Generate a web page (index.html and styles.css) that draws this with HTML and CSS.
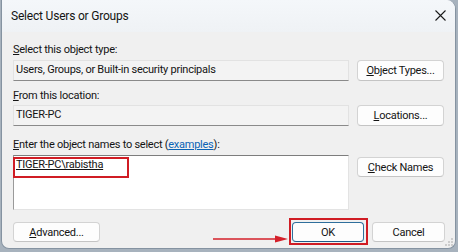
FILE: index.html
```html
<!DOCTYPE html>
<html>
<head>
<meta charset="utf-8">
<link rel="stylesheet" href="styles.css">
</head>
<body>
<div class="window">
  <div class="titlebar">
    <span class="title">Select Users or Groups</span>
    <svg class="close" width="11" height="11" viewBox="0 0 11 11"><path d="M0.5 0.5 L10.5 10.5 M10.5 0.5 L0.5 10.5" stroke="#1a1a1a" stroke-width="1.1" fill="none"/></svg>
  </div>
  <div class="content">
    <div class="label l1"><u>S</u>elect this object type:</div>
    <div class="row">
      <div class="field">Users, Groups, or Built-in security principals</div>
      <div class="btn"><u>O</u>bject Types...</div>
    </div>
    <div class="label l2"><u>F</u>rom this location:</div>
    <div class="row">
      <div class="field">TIGER-PC</div>
      <div class="btn"><u>L</u>ocations...</div>
    </div>
    <div class="label l3"><u>E</u>nter the object names to select (<a class="link">examples</a>):</div>
    <div class="row top">
      <div class="textarea"><span class="name">TIGER-PC\rabistha</span><span class="redbox box1"></span></div>
      <div class="btn check"><u>C</u>heck Names</div>
    </div>
    <div class="bottom">
      <div class="btn adv"><u>A</u>dvanced...</div>
      <div class="spacer"></div>
      <div class="okwrap">
        <div class="btn ok">OK</div>
        <span class="redbox box2"></span>
        <svg class="arrow" width="78" height="10" viewBox="0 0 78 10"><path d="M0 5 H64" stroke="#d4202a" stroke-width="1.6"/><path d="M62 1.5 L75 5 L62 8.5 Z" fill="#d4202a"/></svg>
      </div>
      <div class="btn cancel">Cancel</div>
    </div>
  </div>
  <svg class="grip" width="8" height="8" viewBox="0 0 8 8"><g fill="#a0a0a0"><circle cx="7" cy="1" r="0.8"/><circle cx="4" cy="4" r="0.8"/><circle cx="7" cy="4" r="0.8"/><circle cx="1" cy="7" r="0.8"/><circle cx="4" cy="7" r="0.8"/><circle cx="7" cy="7" r="0.8"/></g></svg>
</div>
</body>
</html>
```
FILE: styles.css
```css
html, body {
  margin: 0;
  padding: 0;
}
body {
  width: 458px;
  height: 252px;
  background: #a7b2bd;
  font-family: Roboto, "Liberation Sans", Arial, sans-serif;
  font-size: 11px;
  letter-spacing: -0.25px;
  color: #141414;
  overflow: hidden;
}
.window {
  position: relative;
  margin-left: 1px;
  width: 453px;
  height: 248px;
  border: 1px solid #8593a1;
  border-top: none;
  border-radius: 0 9px 8px 8px;
  background: #f0f0f0;
  overflow: hidden;
}
.titlebar {
  height: 32px;
  display: flex;
  align-items: center;
  justify-content: space-between;
  padding: 0 9px 0 9px;
  background: linear-gradient(#f4f7fa, #eff2f5);
}
.title {
  font-size: 12px;
  letter-spacing: -0.2px;
  margin-top: -1px;
}
.close {
  margin-top: -1px;
}
.content {
  padding: 0 10px 0 11px;
  display: flex;
  flex-direction: column;
}
.label {
  height: 16px;
  line-height: 16px;
}
.l1 { margin-top: 10px; margin-bottom: 2px; }
.l2 { margin-top: 7px; margin-bottom: 1px; }
.l3 { margin-top: 11px; margin-bottom: 2px; }
.row {
  display: flex;
  gap: 8px;
  align-items: center;
}
.row.top { align-items: flex-start; }
.field {
  box-sizing: border-box;
  width: 336px;
  height: 21px;
  line-height: 16px;
  padding: 1px 0 0 2px;
  background: #f3f3f3;
  border: 1px solid #e2e2e2;
  border-bottom-color: #8a8a8a;
}
.btn {
  width: 87px;
  height: 21px;
  box-sizing: border-box;
  background: #fdfdfd;
  border: 1px solid #d3d3d3;
  border-bottom-color: #c4c4c4;
  border-radius: 4px;
  display: flex;
  align-items: center;
  justify-content: center;
  line-height: 1;
}
.textarea {
  position: relative;
  width: 336px;
  height: 55px;
  box-sizing: border-box;
  background: #ffffff;
  border: 1px solid #e3e3e3;
  border-top-color: #7d7d7d;
  border-left-color: #9a9a9a;
  padding: 1px 0 0 2px;
  line-height: 16px;
}
.name {
  text-decoration: underline;
}
.check {
  margin-top: 2px;
  height: 20px;
}
.link {
  color: #0a63b5;
  text-decoration: underline;
}
.bottom {
  display: flex;
  align-items: center;
  margin-top: 12px;
}
.adv {
  width: 87px;
  height: 20px;
}
.spacer { flex: 1; }
.okwrap {
  position: relative;
}
.ok {
  width: 72px;
  height: 20px;
  border: 1px solid #2f6f9c;
  border-bottom-color: #1f5a86;
}
.cancel {
  margin-left: 8px;
  width: 73px;
  height: 20px;
}
.redbox {
  position: absolute;
  border: 2px solid #d01c24;
  box-sizing: border-box;
}
.box1 {
  left: -1px;
  top: 1px;
  width: 116px;
  height: 21px;
}
.box2 {
  left: -3px;
  top: -4px;
  width: 79px;
  height: 27px;
}
.arrow {
  position: absolute;
  left: -79px;
  top: 12px;
}
.grip {
  position: absolute;
  right: 2px;
  bottom: 2px;
}
```
